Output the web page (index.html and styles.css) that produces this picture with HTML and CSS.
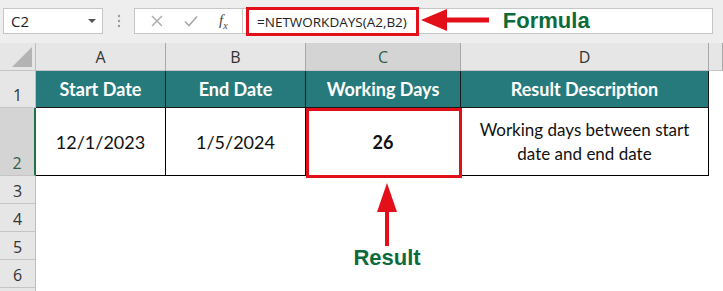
FILE: index.html
```html
<!DOCTYPE html>
<html lang="en">

<head>
  <meta charset="UTF-8">
  <meta name="viewport" content="width=device-width, initial-scale=1.0">
  <title>NETWORKDAYS</title>
  <link rel="stylesheet" href="styles.css">
</head>

<body>
  <div class="formula-row">
    <div class="name-box">
      <span>C2</span>
      <span class="caret"></span>
    </div>
    <div class="grip">
      <svg width="4" height="14" viewBox="0 0 4 14">
        <circle cx="2" cy="2" r="1.2" fill="#9a9a9a" />
        <circle cx="2" cy="7" r="1.2" fill="#9a9a9a" />
        <circle cx="2" cy="12" r="1.2" fill="#9a9a9a" />
      </svg>
    </div>
    <div class="fx-buttons">
      <svg width="12" height="12" viewBox="0 0 12 12">
        <path d="M1 1 L11 11 M11 1 L1 11" stroke="#a8a8a8" stroke-width="1.4" fill="none" />
      </svg>
      <svg width="14" height="12" viewBox="0 0 14 12">
        <path d="M1 6.5 L5 10.5 L13 1.5" stroke="#a8a8a8" stroke-width="1.6" fill="none" />
      </svg>
      <span class="fx">f<sub>x</sub></span>
    </div>
    <div class="formula-input">
      <span class="formula-text">=NETWORKDAYS(A2,B2)</span>
      <svg class="arrow-left" width="68" height="26" viewBox="0 0 68 26">
        <polygon points="0,12 26,1 26,23" fill="#e3101a" />
        <rect x="25" y="9.5" width="43" height="5" fill="#e3101a" />
      </svg>
      <span class="label">Formula</span>
    </div>
  </div>

  <div class="sheet">
    <!-- column headers -->
    <div class="corner"><span class="corner-mark"></span></div>
    <div class="col-head">A</div>
    <div class="col-head">B</div>
    <div class="col-head selected">C</div>
    <div class="col-head">D</div>
    <div class="col-head"></div>

    <!-- row 1 -->
    <div class="row-head">1</div>
    <div class="cell head">Start Date</div>
    <div class="cell head">End Date</div>
    <div class="cell head">Working Days</div>
    <div class="cell head">Result Description</div>
    <div class="blank"></div>

    <!-- row 2 -->
    <div class="row-head selected">2</div>
    <div class="cell">12/1/2023</div>
    <div class="cell">1/5/2024</div>
    <div class="cell picked"><b>26</b></div>
    <div class="cell desc">Working days between start<br>date and end date</div>
    <div class="blank"></div>

    <div class="row-head">3</div>
    <div class="blank wide"></div>
    <div class="row-head">4</div>
    <div class="blank wide"></div>
    <div class="row-head">5</div>
    <div class="blank wide"></div>
    <div class="row-head">6</div>
    <div class="blank wide"></div>
    <div class="row-head"></div>
    <div class="blank wide"></div>

    <div class="callout-up">
      <svg width="22" height="63" viewBox="0 0 22 63">
        <polygon points="11,0 1,29 21,29" fill="#e3101a" />
        <rect x="9" y="28" width="4" height="35" fill="#e3101a" />
      </svg>
      <span class="label">Result</span>
    </div>
  </div>
</body>

</html>
```

FILE: styles.css
```css
body {
  margin: 0;
  font-family: Lato, sans-serif;
  background: #fff;
  overflow: hidden;
}

/* formula bar */
.formula-row {
  display: flex;
  height: 26px;
  padding: 8px 10px 9px 3px;
  background: #eeeeee;
}

.name-box {
  width: 100px;
  box-sizing: border-box;
  display: flex;
  align-items: center;
  justify-content: space-between;
  padding: 0 6px 0 7px;
  border: 1px solid #c6c6c6;
  background: #fff;
  font: 15px "Open Sans", sans-serif;
  color: #222;
}

.caret {
  border-left: 4px solid transparent;
  border-right: 4px solid transparent;
  border-top: 4px solid #555;
}

.grip {
  width: 31px;
  display: flex;
  align-items: center;
  justify-content: center;
}

.fx-buttons {
  width: 109px;
  box-sizing: border-box;
  display: flex;
  align-items: center;
  justify-content: space-around;
  padding: 0 4px 0 6px;
  border: 1px solid #c6c6c6;
  background: #fff;
}

.fx {
  font: italic 15px "Liberation Serif", serif;
  color: #444;
}

.fx sub {
  font-size: 10px;
}

.formula-input {
  flex: 1;
  display: flex;
  align-items: center;
  border: 1px solid #c6c6c6;
  border-left: none;
  background: #fff;
}

.formula-text {
  align-self: stretch;
  display: flex;
  align-items: center;
  margin: -2px 0 -3px 3px;
  padding: 0 9px 0 8px;
  border: 3px solid #e3101a;
  font: 13.5px "Open Sans", sans-serif;
  color: #222;
}

.arrow-left {
  margin-left: 2px;
}

.label {
  font: bold 22px "Liberation Sans", Arial, sans-serif;
  color: #0d6b3b;
  line-height: 1;
}

.formula-input .label {
  margin-left: 14px;
}

/* grid */
.sheet {
  position: relative;
  display: grid;
  grid-template-columns: 36px 130px 140px 155px 248px 1fr;
  grid-template-rows: 28px 37px 68px repeat(4, 28px) 28px;
}

.corner,
.col-head,
.row-head {
  box-sizing: border-box;
  background: #e6e6e6;
  border-right: 1px solid #bdbdbd;
  border-bottom: 1px solid #c4c4c4;
  font: 16px "Open Sans", sans-serif;
  color: #333;
}

.corner {
  display: flex;
  align-items: flex-end;
  justify-content: flex-end;
  padding: 0 3px 3px 0;
}

.corner-mark {
  width: 20px;
  height: 20px;
  background: #b3b3b3;
  clip-path: polygon(100% 0, 100% 100%, 0 100%);
}

.col-head {
  display: flex;
  align-items: center;
  justify-content: center;
  border-right-color: #a8a8a8;
}

.col-head.selected {
  background: #d4d4d4;
  color: #2f5f48;
}

.row-head {
  display: flex;
  align-items: flex-end;
  justify-content: center;
  padding-bottom: 1px;
}

.row-head.selected {
  background: #d4d4d4;
  border-right: 2px solid #217346;
  color: #2f5f48;
}

.cell {
  box-sizing: border-box;
  display: flex;
  align-items: center;
  justify-content: center;
  text-align: center;
  border-right: 1px solid #000;
  border-bottom: 1px solid #000;
  font-size: 18px;
  color: #111;
}

.cell.head {
  background: #277a7b;
  color: #fff;
  font-weight: bold;
  border-color: #1a1a1a;
}

.cell.desc {
  font-size: 17px;
  line-height: 24px;
}

.cell.picked {
  position: relative;
}

.cell.picked::after {
  content: "";
  position: absolute;
  left: 0;
  top: 0;
  right: -2px;
  bottom: -3px;
  border: 3.5px solid #e3101a;
}

.blank {
  background: #fff;
}

.blank.wide {
  grid-column: span 5;
}

/* result pointer under C2 */
.callout-up {
  position: absolute;
  left: 337px;
  top: 140px;
  width: 100px;
  display: flex;
  flex-direction: column;
  align-items: center;
}

.callout-up .label {
  margin-top: 1px;
}
```
